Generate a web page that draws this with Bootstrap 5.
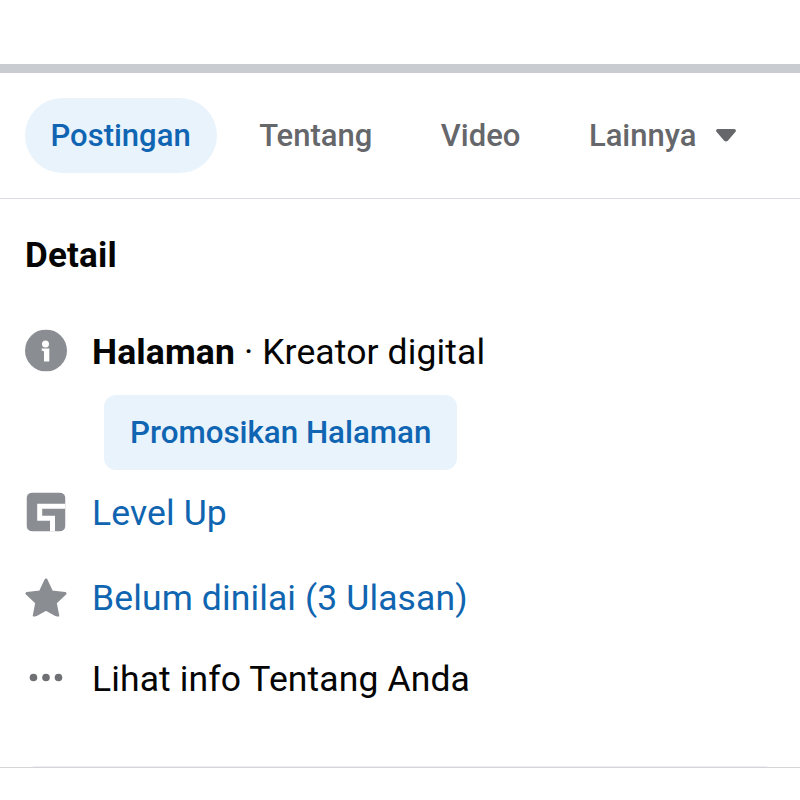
<!DOCTYPE html>
<html lang="id">
<head>
<meta charset="utf-8">
<title>Detail</title>
<link href="https://cdn.jsdelivr.net/npm/bootstrap@5.3.0/dist/css/bootstrap.min.css" rel="stylesheet">
<style>
html,body{height:800px;overflow:hidden;background:#fff}
body{font-family:Roboto,"Liberation Sans",sans-serif;color:#050505}
.top-gap{height:64px}
.thick-sep{height:9px;background:#c9ccd1}
.tab-bar{height:126px;padding:25px 0 0 25px;border-bottom:1px solid #dadde1}
.tab-pill{height:75px;border-radius:38px;font-size:31px;font-weight:500;color:#65676b;line-height:75px;padding:0 26px 0 25.500px;margin-right:17px}
.tab-pill.tab-on{background:#e9f3fc;color:#1065b3}
.tab-caret{margin-left:20px;width:20px;height:13px}
.detail-wrap{padding:0 0 0 25px}
.detail-title{font-size:35px;font-weight:700;line-height:38px;margin:38px 0 0;color:#050505;letter-spacing:.2px}
.info-row{font-size:35.500px;line-height:40px;letter-spacing:.12px}
.row-ic{width:42px;flex:0 0 42px;margin-right:25px;display:flex;justify-content:center}
.row-ic svg{transform:translateY(-1.500px)}
.row-ic svg.ic-g{transform:translate(-.5px,-1.500px)}
.row-link{color:#1065b0;text-decoration:none}
.promo-btn{display:inline-block;height:75px;line-height:75px;background:#e9f3fc;color:#1065b3;font-size:31.300px;font-weight:500;padding:0 26px;border-radius:12px;margin:22px 0 0 79px;border:0}
.row-1{margin-top:56px}
.row-2{margin-top:23px}
.row-3{margin-top:45px}
.row-4{margin-top:41px}
.bottom-inner{height:1px;background:#eeeff1;margin:67px 33px 0}
.bottom-sep{height:1px;background:#d3d5d8}
</style>
</head>
<body>
<div class="top-gap"></div>
<div class="thick-sep"></div>
<nav class="tab-bar d-flex align-items-start">
  <div class="tab-pill tab-on">Postingan</div>
  <div class="tab-pill">Tentang</div>
  <div class="tab-pill">Video</div>
  <div class="tab-pill d-flex align-items-center">Lainnya
    <svg class="tab-caret" viewBox="0 0 20 13"><path d="M2 0h16c1.800 0 2.500 1.800 1.300 3.100l-7.500 8.600c-1 1.100-2.600 1.100-3.600 0L.7 3.100C-.5 1.800.2 0 2 0z" fill="#65676b"/></svg>
  </div>
</nav>
<section class="detail-wrap">
  <h2 class="detail-title">Detail</h2>
  <div class="info-row row-1 d-flex align-items-center">
    <span class="row-ic"><svg width="42" height="42" viewBox="0 0 42 42"><circle cx="21" cy="21" r="21" fill="#8a8d91"/><circle cx="20.500" cy="14.500" r="3.500" fill="#fff"/><path d="M16.700 19h7.600v13h-5.300V22.500c0-1-.8-1.300-2.300-1.300z" fill="#fff"/></svg></span>
    <span><b style="font-weight:700">Halaman</b> · Kreator digital</span>
  </div>
  <button class="promo-btn">Promosikan Halaman</button>
  <div class="info-row row-2 d-flex align-items-center">
    <span class="row-ic"><svg class="ic-g" width="39" height="39" viewBox="0 0 39 39"><rect width="39" height="39" rx="6" fill="#8a8d91"/><path d="M39 13.800H13.200V25.800H26V39" fill="none" stroke="#fff" stroke-width="5"/></svg></span>
    <a class="row-link" href="#">Level Up</a>
  </div>
  <div class="info-row row-3 d-flex align-items-center">
    <span class="row-ic"><svg width="43" height="39" viewBox="0 0 43 40" preserveAspectRatio="none"><path d="M21.500 2.500l5.800 12.200 13.700 1.700-10 9.400 2.600 13.400-12.100-6.600-12.100 6.600 2.600-13.400-10-9.400 13.700-1.700z" fill="#8a8d91" stroke="#8a8d91" stroke-width="3" stroke-linejoin="round"/></svg></span>
    <a class="row-link" href="#">Belum dinilai (3 Ulasan)</a>
  </div>
  <div class="info-row row-4 d-flex align-items-center">
    <span class="row-ic"><svg width="34" height="10" viewBox="0 0 34 10"><circle cx="4.500" cy="5" r="3.800" fill="#6e7074"/><circle cx="17" cy="5" r="3.800" fill="#6e7074"/><circle cx="29.500" cy="5" r="3.800" fill="#6e7074"/></svg></span>
    <span>Lihat info Tentang Anda</span>
  </div>
</section>
<div class="bottom-inner"></div>
<div class="bottom-sep"></div>
</body>
</html>
